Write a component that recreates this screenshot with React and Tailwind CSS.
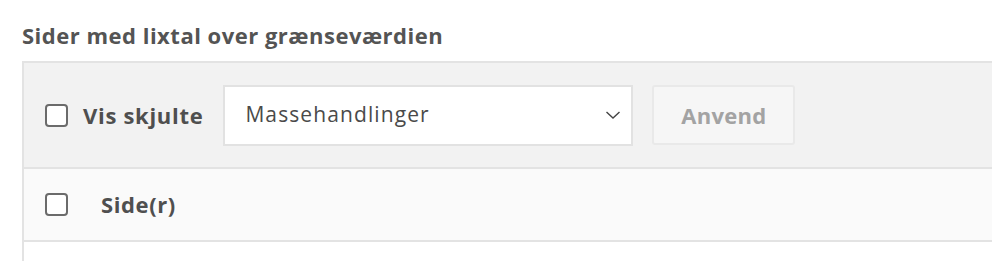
import React from "react";

const Checkbox = () => (
  <span className="block w-[23px] h-[23px] rounded-[4px] border-2 border-[#6b6b6b] bg-white shrink-0" />
);

const App = () => {
  return (
    <div className="w-[992px] h-[261px] overflow-hidden bg-white pl-[22px] pt-[22px] font-['Open_Sans',sans-serif] text-[#555]">
      <h2 className="h-[26px] leading-[26px] text-[22px] font-bold tracking-[0.5px] text-[#545454] mb-[13px]">
        Sider med lixtal over grænseværdien
      </h2>

      <div className="w-[1100px] border-l-2 border-t-2 border-[#e3e3e3]">
        {/* toolbar */}
        <div className="h-[106px] flex items-center pl-[21px] bg-[#f2f2f2] border-b-2 border-[#e3e3e3]">
          <Checkbox />
          <span className="ml-[15px] text-[22px] font-bold tracking-[0.7px] text-[#4f4f4f]">Vis skjulte</span>
          <div className="ml-[20px] w-[410px] h-[61px] flex items-center justify-between bg-white border-2 border-[#e2e2e2] pl-[20px] pr-[10px]">
            <span className="text-[21px] text-[#4a4a4a] tracking-[1.1px]">Massehandlinger</span>
            <svg width="16" height="10" viewBox="0 0 16 10" fill="none">
              <path d="M1.5 2 L8 8 L14.5 2" stroke="#444" strokeWidth="1.4" />
            </svg>
          </div>
          <button className="ml-[19px] w-[143px] h-[60px] bg-[#f6f6f6] border-2 border-[#e9e9e9] rounded-[3px] text-[22px] font-bold tracking-[0.3px] text-[#a3a3a3]">
            Anvend
          </button>
        </div>

        {/* header row */}
        <div className="h-[73px] flex items-center pl-[21px] bg-[#fafafa] border-b-2 border-[#e3e3e3]">
          <Checkbox />
          <span className="ml-[33px] text-[22px] font-bold tracking-[0.6px] text-[#4f4f4f]">Side(r)</span>
        </div>

        <div className="h-[40px] bg-white" />
      </div>
    </div>
  );
};

export default App;
